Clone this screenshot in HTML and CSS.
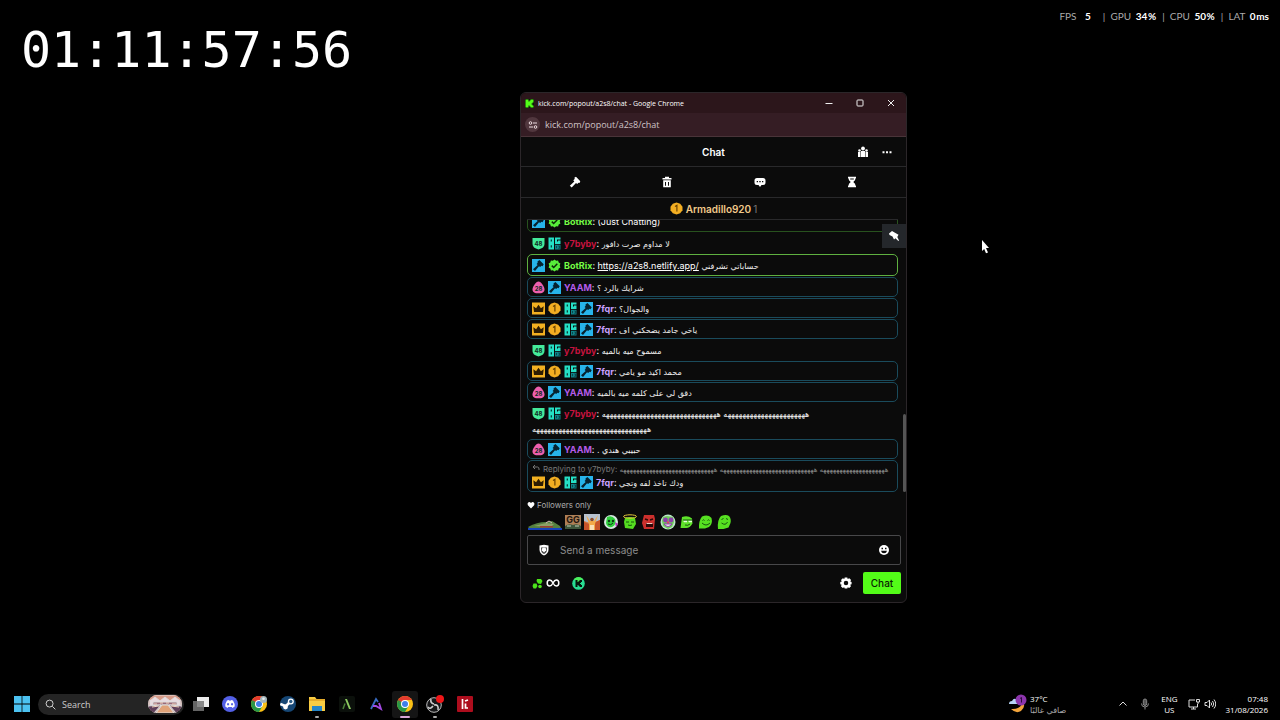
FILE: index.html
```html
<!DOCTYPE html>
<html lang="en">
<head>
  <meta charset="UTF-8">
  <meta name="viewport" content="width=device-width, initial-scale=1.0">
  <title>kick.com/popout/a2s8/chat</title>
  <link rel="stylesheet" href="styles.css">
</head>
<body>
  <!-- shared icons -->
  <svg class="sprite" aria-hidden="true">
    <symbol id="b-mod" viewBox="0 0 13 13">
      <rect width="13" height="13" fill="#27b4ea"/>
      <path d="M5.500 2.500L7.400 1l4.300 4.300-1.200 1.900-1.100-.4-1.200 1.200L7 7.300 3 12 1 10.200l4.700-4.100-1.100-1.200 1.100-1.200z" fill="#06222f"/>
    </symbol>
    <symbol id="b-check" viewBox="0 0 13 13">
      <path d="M6.5.5l1.600 1.200 2-.1.6 1.900 1.700 1.100-.7 1.900.7 1.900-1.700 1.100-.6 1.900-2-.1-1.600 1.200-1.600-1.200-2 .1-.6-1.900L.6 8.400l.7-1.900-.7-1.900 1.700-1.100.6-1.900 2 .1z" fill="#57ed3a"/>
      <path d="M3.800 6.600l1.900 1.900 3.600-3.700" fill="none" stroke="#0b2b06" stroke-width="1.500"/>
    </symbol>
    <symbol id="b-48" viewBox="0 0 13 13">
      <path d="M.5 1h12v6q0 4-6 5.500Q.5 11 .5 7z" fill="#44ea9a"/>
      <text x="6.500" y="8.500" class="badge-num">48</text>
    </symbol>
    <symbol id="b-28" viewBox="0 0 13 13">
      <path d="M6.500.5C9 .5 12.500 5.500 12.500 8.500S10 12.300 6.500 12.300.5 11.500.5 8.500 4 .5 6.500.5z" fill="#ed5fae"/>
      <text x="6.500" y="10" class="badge-num">28</text>
    </symbol>
    <symbol id="b-og" viewBox="0 0 13 13">
      <path d="M.5.5h5.500v12H.5zM7 .5h5.500v2H9v2h1V3.500h2.500v3.500H7z" fill="#25e0c5"/>
      <path d="M2.700 2.500h1.200v2H2.700zM2.700 8.300h1.200v2.200H2.700z" fill="#07322e"/>
      <path d="M7 7.800h5.500v4.700H7z" fill="#0f8389"/>
      <path d="M8.500 9v2.200M10.300 9h1.300v2.300h-1.300" fill="none" stroke="#073a3e" stroke-width=".8"/>
    </symbol>
    <symbol id="b-crown" viewBox="0 0 13 13">
      <rect y=".5" width="13" height="12" fill="#f2b021"/>
      <path d="M2 10L1.300 4.200l2.800 2.100L6.500 2.800l2.400 3.500 2.800-2.100L11 10z" fill="#2d1c02"/>
    </symbol>
    <symbol id="b-one" viewBox="0 0 13 13">
      <path d="M6.500.4l3.700 1.300 2.300 3v3.600l-2.300 3-3.700 1.300-3.700-1.300-2.300-3V4.700l2.300-3z" fill="#f3ae22"/>
      <path d="M5 4.600l1.900-1.200v6" fill="none" stroke="#6b4300" stroke-width="1.200"/>
    </symbol>
    <symbol id="i-chrome" viewBox="0 0 16 16">
      <circle cx="8" cy="8" r="8" fill="#fbc116"/>
      <path d="M8 8L1.100 4A8 8 0 0 1 14.900 4H8z" fill="#e33b2e"/>
      <path d="M1.100 4A8 8 0 0 0 8 16l3.500-6L8 8z" fill="#279847"/>
      <path d="M1.100 4L4.500 10 8 8V4z" fill="#e33b2e"/>
      <path d="M1.100 4l3.400 6 3 2L8 8z" fill="#279847"/>
      <circle cx="8" cy="8" r="4" fill="#fff"/>
      <circle cx="8" cy="8" r="3" fill="#3f7fe8"/>
    </symbol>
  </svg>

  <main class="desktop">
    <header class="hud">
      <div class="timer">01:11:57:56</div>
      <div class="stats">
        <span class="fps">FPS <b>5</b></span>
        <span>|&nbsp; GPU <b>34&#8202;%</b></span>
        <span>|&nbsp; CPU <b>50&#8202;%</b></span>
        <span>|&nbsp; LAT <b>0&#8202;ms</b></span>
      </div>
    </header>

    <section class="window">
      <div class="titlebar">
        <svg class="favicon" viewBox="0 0 9 9"><rect width="9" height="9" fill="#0b1508"/><path d="M.5.5h3v2h1v-1h1v-1h3v3h-1v1h-1v1h1v1h1v2h-3v-1h-1v-1h-1v2h-3z" fill="#53fc18"/></svg>
        <h1>kick.com/popout/a2s8/chat - Google Chrome</h1>
        <button class="win-btn" aria-label="Minimize"><svg viewBox="0 0 8 8"><path d="M.5 4.500h7"/></svg></button>
        <button class="win-btn" aria-label="Maximize"><svg viewBox="0 0 8 8"><rect x="1" y="1" width="6" height="6" rx=".8"/></svg></button>
        <button class="win-btn" aria-label="Close"><svg viewBox="0 0 8 8"><path d="M1 1l6 6M7 1L1 7"/></svg></button>
      </div>
      <div class="urlbar">
        <button class="site-info" aria-label="Site information"><svg viewBox="0 0 10 10"><circle cx="2.500" cy="3" r="1.300"/><path d="M5 3h4M1 7h4"/><circle cx="7.500" cy="7" r="1.300"/></svg></button>
        <input class="url" aria-label="Address" value="kick.com/popout/a2s8/chat" readonly>
      </div>

      <div class="chat-head">
        <h2>Chat</h2>
        <div class="head-tools">
          <button aria-label="Community"><svg class="ico" viewBox="0 0 12 12"><circle cx="6" cy="2.500" r="1.900"/><circle cx="2.500" cy="4.500" r="1.300"/><circle cx="9.500" cy="4.500" r="1.300"/><path d="M4 5h4v6H4zM1 6h2.500v5H1zM8.500 6H11v5H8.500z"/></svg></button>
          <button aria-label="More"><svg class="ico" viewBox="0 0 12 12"><path d="M1.500 5.200h2v2h-2zM5 5.200h2v2H5zM8.500 5.200h2v2h-2z"/></svg></button>
        </div>
      </div>

      <div class="mod-bar">
        <button aria-label="Ban"><svg class="ico" viewBox="0 0 12 12"><path d="M5.500 1.500L7 .8l4.300 4.500L10.500 7l-1-.2-1.300 1.300L7 7l-4.300 4.500L.8 9.800 5.300 5.500l-1-1.200 1.400-1.400z"/></svg></button>
        <button aria-label="Delete"><svg class="ico" viewBox="0 0 12 12"><path fill-rule="evenodd" d="M4 .8h4V2h2.500v1.500h-9V2H4zM2.200 4.300h7.600v7H2.200zM4 6v3.700h1V6zm3 0v3.700h1V6z"/></svg></button>
        <button aria-label="Replies"><svg class="ico" viewBox="0 0 12 12"><path fill-rule="evenodd" d="M3 2h6q2.500 0 2.500 2.500v2Q11.500 9 9 9H7.500L6 11 4.500 9H3Q.5 9 .5 6.500v-2Q.5 2 3 2zm-.3 3v1.300H4V5zm2.600 0v1.300h1.400V5zM8 5v1.300h1.300V5z"/></svg></button>
        <button aria-label="Slow mode"><svg class="ico" viewBox="0 0 12 12"><path fill-rule="evenodd" d="M2 .8h8v1.700H9.200v1.500L7.300 6l1.900 2v1.500h.8v1.700H2V9.500h.8V8l1.900-2-1.900-2V2.500H2zM4.200 2.500v1h3.600v-1z"/></svg></button>
      </div>

      <div class="leader">
        <svg class="badge"><use href="#b-one"/></svg>
        <strong>Armadillo920</strong> <span>1</span>
      </div>

      <div class="feed">
        <ul class="messages">
          <li class="boxed bot dim"><svg class="badge"><use href="#b-mod"/></svg><svg class="badge"><use href="#b-check"/></svg><b class="green">BotRix</b>: (Just Chatting)</li>
          <li><svg class="badge"><use href="#b-48"/></svg><svg class="badge"><use href="#b-og"/></svg><b class="red">y7byby</b>: <span class="ar" dir="rtl" lang="ar">لا مداوم صرت دافور</span></li>
          <li class="boxed bot"><svg class="badge"><use href="#b-mod"/></svg><svg class="badge"><use href="#b-check"/></svg><b class="green">BotRix</b>: <a href="https://a2s8.netlify.app/">https://a2s8.netlify.app/</a> <span class="ar" dir="rtl" lang="ar">حساباتي تشرفني</span></li>
          <li class="boxed"><svg class="badge"><use href="#b-28"/></svg><svg class="badge"><use href="#b-mod"/></svg><b class="purple">YAAM</b>: <span class="ar" dir="rtl" lang="ar">شرايك بالرد ؟</span></li>
          <li class="boxed"><svg class="badge"><use href="#b-crown"/></svg><svg class="badge"><use href="#b-one"/></svg><svg class="badge"><use href="#b-og"/></svg><svg class="badge"><use href="#b-mod"/></svg><b class="lilac">7fqr</b>: <span class="ar" dir="rtl" lang="ar">والجوال؟</span></li>
          <li class="boxed"><svg class="badge"><use href="#b-crown"/></svg><svg class="badge"><use href="#b-one"/></svg><svg class="badge"><use href="#b-og"/></svg><svg class="badge"><use href="#b-mod"/></svg><b class="lilac">7fqr</b>: <span class="ar" dir="rtl" lang="ar">ياخي جامد يضحكني اف</span></li>
          <li><svg class="badge"><use href="#b-48"/></svg><svg class="badge"><use href="#b-og"/></svg><b class="red">y7byby</b>: <span class="ar" dir="rtl" lang="ar">مسموح ميه بالميه</span></li>
          <li class="boxed"><svg class="badge"><use href="#b-crown"/></svg><svg class="badge"><use href="#b-one"/></svg><svg class="badge"><use href="#b-og"/></svg><svg class="badge"><use href="#b-mod"/></svg><b class="lilac">7fqr</b>: <span class="ar" dir="rtl" lang="ar">محمد اكيد مو يامي</span></li>
          <li class="boxed"><svg class="badge"><use href="#b-28"/></svg><svg class="badge"><use href="#b-mod"/></svg><b class="purple">YAAM</b>: <span class="ar" dir="rtl" lang="ar">دقق لي على كلمه ميه بالميه</span></li>
          <li><svg class="badge"><use href="#b-48"/></svg><svg class="badge"><use href="#b-og"/></svg><b class="red">y7byby</b>: <span class="ar" dir="rtl" lang="ar">ههههههههههههههههههههههه هههههههههههههههههههههههههههههههه هههههههههههههههههههههههههههههههه</span></li>
          <li class="boxed"><svg class="badge"><use href="#b-28"/></svg><svg class="badge"><use href="#b-mod"/></svg><b class="purple">YAAM</b>: <span class="ar" dir="rtl" lang="ar">حبيبي هندي .</span></li>
          <li class="boxed">
            <div class="reply"><svg viewBox="0 0 8 8"><path d="M3 1L1 3l2 2M1 3h4.500q1.500 0 1.500 2v1"/></svg>Replying to y7byby: <span class="ar" dir="rtl" lang="ar">ههههههههههههههههههههه هههههههههههههههههههههههههههههه هههههههههههههههههههههههههههههه</span></div>
            <svg class="badge"><use href="#b-crown"/></svg><svg class="badge"><use href="#b-one"/></svg><svg class="badge"><use href="#b-og"/></svg><svg class="badge"><use href="#b-mod"/></svg><b class="lilac">7fqr</b>: <span class="ar" dir="rtl" lang="ar">ودك تاخذ لفه وتجي</span>
          </li>
        </ul>
        <button class="pin" aria-label="Pinned message"><svg class="ico" viewBox="0 0 12 12"><path d="M1 3.500L4 1l3 1.800 3.500 2L9.300 7l1.700 3.500-.7.500L7.500 8.300 6 9.500 4.500 6.500 1.500 5z"/></svg></button>
        <div class="scroll-thumb"></div>
      </div>

      <div class="composer">
        <p class="followers"><svg viewBox="0 0 9 9"><path d="M4.500 8.300L1 4.800Q0 3 1.300 1.600 3 .5 4.500 2.300 6 .5 7.700 1.600 9 3 8 4.800z" fill="#fff"/></svg>Followers only</p>
        <div class="emotes">
          <button class="wide" aria-label="Emote frog car"><svg viewBox="0 0 34 16"><path d="M0 13q9-5 18-5l6-1 8 5 1 2H1z" fill="#55803f"/><path d="M6 12l12-3 8 1-3 3z" fill="#8ca066"/><path d="M18 9l3-2 3 2" stroke="#d3b7b5" fill="none"/><path d="M12 12h13v1.500H12z" fill="#9d3e31"/><path d="M0 14h34v2H0z" fill="#1643bd"/></svg></button>
          <button aria-label="Emote GG"><svg viewBox="0 0 16 16"><rect y="1" width="16" height="14" fill="#ae8058"/><text x="8" y="9" class="gg">GG</text><path d="M0 12q4-3 8-1 4-2 8 1v3H0z" fill="#3f573c"/><path d="M2 12h4M10 12h4" stroke="#c7d2ba"/></svg></button>
          <button aria-label="Emote cheer"><svg viewBox="0 0 16 16"><rect width="16" height="16" fill="#d77b42"/><path d="M0 0h16v6L9 10 0 7z" fill="#b6c1cf"/><path d="M0 8l5 2v6H0zM11 8l5-2v10h-5z" fill="#c8542a"/><path d="M2 1l4 6h4l4-6-3 9v6H5v-6z" fill="#f3a948"/><path d="M6 11h4v5H6z" fill="#f9dfb8"/><circle cx="8" cy="5.500" r="1.800" fill="#8a4a29"/></svg></button>
          <button aria-label="Emote headphones"><svg viewBox="0 0 16 16"><circle cx="8" cy="8" r="7" fill="#d7e9e1"/><path d="M4 3q5-2 8 2 2 5-3 8-5 1-6-4z" fill="#2fcf3c"/><circle cx="6" cy="7" r="1.200" fill="#103815"/><circle cx="10" cy="7" r="1.200" fill="#103815"/><path d="M5 10q3 2 5-1" stroke="#103815" fill="none"/><path d="M12 8l3 2-2 3z" fill="#b02bb7"/></svg></button>
          <button aria-label="Emote angel"><svg viewBox="0 0 16 16"><path d="M3 4q5-2 10 0l1 6-3 5-8-1-1-6z" fill="#54dc20"/><ellipse cx="8" cy="2.500" rx="6.500" ry="1.700" fill="none" stroke="#e6c83b"/><path d="M4 8h3M9 8h3M6 11q2 1 4 0" stroke="#15570b" fill="none"/></svg></button>
          <button aria-label="Emote rage"><svg viewBox="0 0 16 16"><path d="M3 1h10l1 4-1 10H3L1 9z" fill="#cc302d"/><path d="M4 5l3 1M12 5L9 6" stroke="#310806" stroke-width="1.500"/><path d="M5 9h7v4H5z" fill="#2d0909"/><path d="M5.500 9.500h6" stroke="#f4c8bf"/></svg></button>
          <button aria-label="Emote clown"><svg viewBox="0 0 16 16"><circle cx="8" cy="8" r="7.500" fill="#bce5c8"/><path d="M3 3l4-1 6 1 1 5-2 5-4 2-5-3-1-5z" fill="#6fca5c"/><circle cx="5.500" cy="6" r="2.400" fill="#8d3fae"/><circle cx="11" cy="6" r="2.400" fill="#8d3fae"/><circle cx="8" cy="8.500" r="1.300" fill="#e33a6b"/><path d="M4 10q4 5 8 0z" fill="#f4f4f4" stroke="#8d3fae"/></svg></button>
          <button aria-label="Emote smirk"><svg viewBox="0 0 16 16"><path d="M3 3q6-2 10 1.500l.5 5q-3 5-7 4.500H1.500z" fill="#5fe32a"/><path d="M4 6.500h4v1.800H5zM9 6.500h4v1.800h-3z" fill="#e5ffd9"/><path d="M4 6h9M6 11q3 1 5-1" stroke="#17560e" fill="none"/></svg></button>
          <button aria-label="Emote happy"><svg viewBox="0 0 16 16"><path d="M4 2.500q6-2.500 9.500 1.500 1.500 6-2.500 9l-4 1.500H1Q.5 7 4 2.500z" fill="#56e021"/><path d="M4.500 6.500q1-1.500 2 0M9.500 6.500q1-1.500 2 0M4 9q4 4 8 0" stroke="#17560e" fill="none"/></svg></button>
          <button aria-label="Emote smile"><svg viewBox="0 0 16 16"><path d="M4 2q5-2 8 0 2.500 3 1.500 7l-2 4.500-5 1.500H1Q0 6 4 2z" fill="#56e021"/><path d="M4.500 5.500l2-1M9 4.500l2 1M4.500 9q4 3 6-1" stroke="#17560e" fill="none"/></svg></button>
        </div>
        <div class="message-box">
          <svg class="ico" viewBox="0 0 12 12"><path d="M1.500 1.500L6 .8l4.500.7v4Q10.500 9.500 6 11.500 1.500 9.500 1.500 5.500z"/><path d="M3 3.500h6v2Q9 8.500 6 10 3 8.500 3 5.500z" fill="#444"/><path d="M3.800 4.500L6 3.500l2.200 1v1.700L6 8.500 3.800 6.200z"/></svg>
          <input type="text" aria-label="Send a message" placeholder="Send a message">
          <button aria-label="Emotes"><svg class="ico" viewBox="0 0 12 12"><circle cx="6" cy="6" r="5"/><path d="M3.500 4.500h1.500M7 4.500h1.500" stroke="#0b0b0b" stroke-width="1.300"/><path d="M3 6.800h6Q8.500 9.300 6 9.300T3 6.800z" fill="#0b0b0b"/></svg></button>
        </div>
        <div class="actions">
          <button class="points" aria-label="Channel points">
            <svg viewBox="0 0 11 11"><path d="M5 1h4l1.500 2L9 6 6 5.500 4.500 3zM1.500 5.500h3L5.500 8 4 10.500H1.500L.5 8z" fill="#4be41b"/><circle cx="8" cy="8.500" r="1.800" fill="#4be41b"/></svg>
            <svg class="infinity" viewBox="0 0 14 10"><path d="M7 5Q5.500 2 3.700 2a2.500 3 0 0 0 0 6Q5.500 8 7 5t3.300-3a2.500 3 0 0 1 0 6Q8.500 8 7 5z"/></svg>
          </button>
          <button class="kicks" aria-label="Kicks"><svg viewBox="0 0 13 13"><circle cx="6.500" cy="6.500" r="6.300" fill="#27dd93"/><path d="M2 2A6.300 6.300 0 0 1 11 2L6 6z" fill="#4cf05a"/><path d="M3.500 3h2v2h1V4h1V3h2.500v2H9v1H8v1h1v1h1v2H7.500V9h-1V8h-1v2h-2z" fill="#06160e"/></svg></button>
          <button class="gear" aria-label="Chat settings"><svg class="ico" viewBox="0 0 12 12"><path fill-rule="evenodd" d="M4.700.5h2.600l.4 1.500 1.600-.8 1.800 1.900L10.300 4.500l1.300.4v2.400l-1.400.4.800 1.500-1.800 1.800-1.500-.7-.4 1.300H4.700l-.5-1.400-1.500.8-1.800-1.800.8-1.500L.3 7.300V4.900l1.500-.5L1 3l1.800-1.800 1.500.7zM6 3.800A2.200 2.200 0 1 0 6 8.300 2.200 2.200 0 1 0 6 3.800z"/></svg></button>
          <button class="send">Chat</button>
        </div>
      </div>
    </section>

    <svg class="cursor" viewBox="0 0 9 14"><path d="M1 0l7 8H5l2 4.500-2 .8L3.200 9 1 11z" fill="#fff"/></svg>
  </main>

  <footer class="taskbar">
    <nav class="apps">
      <button aria-label="Start"><svg viewBox="0 0 16 16"><path d="M0 0h7.600v7.600H0zM8.400 0H16v7.600H8.400zM0 8.400h7.600V16H0zM8.400 8.400H16V16H8.400z" fill="#4cc2f1"/></svg></button>
      <label class="search">
        <svg viewBox="0 0 12 12"><circle cx="5" cy="5" r="3.800"/><path d="M8 8l3.300 3.300"/></svg>
        <input type="text" placeholder="Search" aria-label="Search">
        <svg class="scene" viewBox="0 0 34 18"><clipPath id="oval"><rect width="34" height="18" rx="9"/></clipPath><g clip-path="url(#oval)"><rect width="34" height="18" fill="#cfa9a5"/><path d="M0 0h34v5L17 7 0 5z" fill="#d79b89"/><path d="M2 6l5-4 5 4 5-4 5 4 5-4 5 4v5H2z" fill="#eadbe0"/><path d="M5 7h24v3H5z" fill="#9a6a78"/><path d="M0 11l13-1-7 8H0zM34 11l-13-1 7 8h6z" fill="#60405a"/><path d="M14 10h6l6 8H8z" fill="#dfa278"/><path d="M4 12l7-1M23 11l8 1M6 9h3M12 8h3M18 8h3M24 9h4" stroke="#f4d8c2"/></g></svg>
      </label>
      <button aria-label="Task view"><svg viewBox="0 0 16 16"><rect x="4" y="1" width="12" height="10" fill="#ececec"/><rect y="5" width="11" height="10" fill="#777" opacity=".85"/></svg></button>
      <button aria-label="Discord"><svg viewBox="0 0 16 16"><circle cx="8" cy="8" r="8" fill="#5360e6"/><path fill-rule="evenodd" d="M5 4.500l2-.5.5.8h1L9 4l2 .5q2 3 1.700 6L10.500 12l-.8-1H6.300l-.8 1-2.200-1.500Q3 7.500 5 4.500zM6 7a1.100 1.200 0 1 0 .1 0zM10 7a1.100 1.200 0 1 0 .1 0z" fill="#fff"/></svg></button>
      <button aria-label="Chrome profile"><svg viewBox="0 0 16 16"><use href="#i-chrome"/><circle cx="12.500" cy="3.500" r="3.500" fill="#a4b7bc"/><circle cx="12.500" cy="2.800" r="1.300" fill="#e9edf0"/></svg></button>
      <button aria-label="Steam"><svg viewBox="0 0 16 16"><circle cx="8" cy="8" r="8" fill="#164775"/><path d="M.3 8l5 2M5 11l5-5" stroke="#fff" stroke-width="2.600"/><circle cx="5.500" cy="11" r="2.400" fill="#fff"/><circle cx="10.800" cy="5.500" r="3" fill="#fff"/><circle cx="10.800" cy="5.500" r="1.700" fill="#2b5d88"/></svg></button>
      <button class="running" aria-label="File Explorer"><svg viewBox="0 0 16 16"><path d="M0 1h6l1.500 2H16v12H0z" fill="#f8cc43"/><path d="M0 3h16v2H0z" fill="#e6ad2b"/><path d="M3 10h10v5H3z" fill="#2586c9"/></svg></button>
      <button aria-label="App A green"><svg viewBox="0 0 16 16"><rect width="16" height="16" rx="2" fill="#0b100b"/><path d="M6 3h2l4 10h-2z" fill="#8cc860"/><path d="M6 7.500L4 13" fill="none" stroke="#4c8238" stroke-width="1.500"/></svg></button>
      <button aria-label="App A purple"><svg viewBox="0 0 16 16"><path d="M3 13L8 3l2 3" fill="none" stroke="#376bc2" stroke-width="1.800"/><path d="M5 10h3l5 3-2-6" fill="none" stroke="#a249e2" stroke-width="1.800"/></svg></button>
      <button class="running active" aria-label="Chrome"><svg><use href="#i-chrome"/></svg></button>
      <button class="running" aria-label="OBS Studio"><svg class="obs" viewBox="0 0 18 18"><circle cx="8" cy="10" r="7.300" fill="#171719" stroke="#bbb"/><path d="M8 9q-4-1-3-5M8 10q5-1 4 5M7 11q-3 4-5 1" fill="none" stroke="#ccc" stroke-width="1.600"/><circle cx="14" cy="4" r="4" fill="#f01618"/></svg></button>
      <button aria-label="App red"><svg viewBox="0 0 16 16"><rect width="16" height="16" rx="1" fill="#ad0d1d"/><path d="M5.500 3v10M8.500 7.500v4.500H11M8 5l3-1" fill="none" stroke="#fff" stroke-width="1.700"/></svg></button>
    </nav>

    <div class="tray">
      <button class="weather">
        <svg viewBox="0 0 20 20"><path d="M15 8q3 5-2 9-5 3-10-2 9 1 12-7z" fill="#f3a43b"/><path d="M1 10q0-3 3-3 2-4 5-1 2 1 1 4z" fill="#b5d4f5"/><circle cx="13" cy="6" r="5.500" fill="#8c35ac"/><path d="M12 4.500l1.500-1V8.500" fill="none" stroke="#2c0b3b"/></svg>
        <span>37°C<br><span class="forecast" dir="rtl" lang="ar">صافي غالبًا</span></span>
      </button>
      <button aria-label="Show hidden icons"><svg viewBox="0 0 12 12"><path d="M2.500 7.500L6 4l3.500 3.500"/></svg></button>
      <button aria-label="Microphone"><svg class="gray" viewBox="0 0 12 12"><rect x="4.300" y="1" width="3.400" height="6.500" rx="1.700" fill="#555"/><path d="M2.500 5.500Q2.500 9 6 9t3.500-3.500M6 9v2.500"/></svg></button>
      <button class="lang">ENG<br>US</button>
      <button class="status" aria-label="Network and volume">
        <svg viewBox="0 0 12 12"><path d="M7 2H1v7h8.500V6M3 11h5M5.500 9v2M8.500 1.500h3v2.500h-3zM10 4v2"/></svg>
        <svg viewBox="0 0 12 12"><path d="M1 4.500h2L5.500 2v8L3 7.500H1zM7 4.500q1.300 1.500 0 3M8.500 3q2.500 3 0 6M10 1.500q3.500 4.500 0 9"/></svg>
      </button>
      <button class="clock">07:48<br>31/08/2026</button>
    </div>
  </footer>
</body>
</html>
```

FILE: styles.css
```css
* {
  box-sizing: border-box;
}
body {
  margin: 0;
  min-height: 100vh;
  display: flex;
  flex-direction: column;
  background: #000;
  color: #fff;
  font-family: Inter, "DejaVu Sans", sans-serif;
  font-size: 10px;
}
button, input {
  font: inherit;
  color: inherit;
  background: none;
  border: 0;
  padding: 0;
  outline: 0;
}
button {
  display: flex;
  align-items: center;
  justify-content: center;
}
h1, h2, p, ul {
  margin: 0;
  padding: 0;
}
.sprite {
  display: none;
}
.desktop {
  flex: 1;
  position: relative;
}

/* overlay */
.hud {
  display: flex;
  justify-content: space-between;
  align-items: flex-start;
  padding: 10px 11px 0 21px;
}
.timer {
  font-family: "DejaVu Sans Mono", monospace;
  font-size: 50px;
  line-height: 80px;
}
.stats {
  display: flex;
  gap: 6px;
  font-family: Lato, sans-serif;
  line-height: 12px;
  color: #aaa;
}
.stats b {
  color: #fff;
  margin-left: 2px;
}
.fps b {
  margin: 0 6px;
}

/* popout window */
.window {
  position: absolute;
  left: 520px;
  top: 92px;
  width: 387px;
  background: #0b0b0b;
  border: 1px solid #2b2629;
  border-radius: 6px;
  overflow: hidden;
}
.titlebar {
  display: flex;
  align-items: center;
  height: 20px;
  padding-left: 4px;
  background: #2c161b;
  font-family: "Open Sans", sans-serif;
}
.titlebar h1 {
  flex: 1;
  margin-left: 4px;
  font-size: 7px;
  font-weight: 400;
}
.favicon {
  width: 9px;
  height: 9px;
}
.win-btn {
  width: 31px;
  height: 19px;
}
.win-btn svg {
  width: 8px;
  height: 8px;
  fill: none;
  stroke: #eee;
}
.urlbar {
  display: flex;
  align-items: center;
  gap: 5px;
  height: 24px;
  padding: 0 4px;
  background: #351d24;
  border-bottom: 1px solid #4a3439;
}
.site-info {
  width: 15px;
  height: 15px;
  border-radius: 50%;
  background: #51373e;
}
.site-info svg {
  width: 10px;
  height: 10px;
  fill: none;
  stroke: #eedde1;
}
.url {
  flex: 1;
  font-family: "Open Sans", sans-serif;
  font-size: 9px;
  color: #cfc3c6;
}
.ico {
  width: 12px;
  height: 12px;
  fill: #fff;
}
.chat-head {
  display: grid;
  grid-template-columns: 1fr auto 1fr;
  align-items: center;
  height: 30px;
  padding: 0 13px;
  border-bottom: 1px solid #29292b;
}
.chat-head h2 {
  grid-column: 2;
  font-size: 10px;
  font-weight: 600;
}
.head-tools {
  display: flex;
  justify-content: flex-end;
  gap: 12px;
}
.mod-bar {
  display: grid;
  grid-template-columns: repeat(4, 1fr);
  height: 31px;
  padding: 0 8px;
  border-bottom: 1px solid #29292b;
}
.leader {
  display: flex;
  align-items: center;
  justify-content: center;
  height: 21px;
  color: #777;
}
.leader strong {
  color: #f1c98a;
  font-weight: 600;
  margin-right: 2px;
}

/* messages */
.feed {
  position: relative;
  height: 273px;
  padding: 0 8px 0 6px;
}
.messages {
  display: flex;
  flex-direction: column;
  justify-content: flex-end;
  gap: 1px;
  height: 100%;
  overflow: hidden;
  border-top: 1px solid #29292b;
  list-style: none;
  font-size: 9px;
}
.messages li {
  flex: none;
  padding: 2px 4px 1px;
  border: 1px solid transparent;
  border-radius: 5px;
  line-height: 15px;
}
.messages .boxed {
  border-color: #1a4b5c;
}
.messages .bot {
  padding: 3px 4px 2px;
  border-color: #5fb040;
}
.messages .dim {
  border-color: #28521e;
}
.messages a {
  color: #fff;
}
.badge {
  width: 13px;
  height: 13px;
  margin-right: 3px;
  vertical-align: -3px;
}
.badge-num {
  font: bold 6px Inter, sans-serif;
  text-anchor: middle;
  fill: #102b1f;
}
.ar {
  font-family: "DejaVu Sans", sans-serif;
  font-size: 8px;
  line-height: 1;
  color: #f2f2f2;
}
.green { color: #75fd45; }
.red { color: #c5133f; }
.purple { color: #b45be8; }
.lilac { color: #c9a0ff; }
.reply {
  height: 12px;
  line-height: 12px;
  font-size: 8px;
  color: #777;
  white-space: nowrap;
  overflow: hidden;
}
.reply .ar {
  font-size: 7px;
  color: #888;
}
.reply svg {
  width: 8px;
  height: 8px;
  margin-right: 3px;
  fill: none;
  stroke: #777;
}
.pin {
  position: absolute;
  right: 0;
  top: 5px;
  width: 24px;
  height: 24px;
  background: #24272b;
}
.scroll-thumb {
  position: absolute;
  right: 0;
  bottom: 0;
  width: 3px;
  height: 78px;
  border-radius: 2px;
  background: #555;
}

/* composer */
.composer {
  padding: 7px 5px 8px 6px;
}
.followers {
  display: flex;
  align-items: center;
  gap: 2px;
  height: 12px;
  font-size: 8px;
  color: #aaa;
}
.followers svg {
  width: 8px;
  height: 8px;
}
.emotes {
  display: flex;
  gap: 3px;
  padding: 3px 0 5px 1px;
}
.emotes svg {
  width: 16px;
  height: 16px;
}
.emotes .wide svg {
  width: 34px;
}
.gg {
  font: bold 9px Inter, sans-serif;
  text-anchor: middle;
  fill: #21150d;
}
.message-box {
  display: flex;
  align-items: center;
  height: 30px;
  padding: 0 10px;
  border: 1px solid #48484a;
  border-radius: 2px;
}
.message-box input {
  flex: 1;
  margin-left: 10px;
}
.message-box input::placeholder {
  color: #8b8b8b;
  opacity: 1;
}
.actions {
  display: flex;
  align-items: center;
  padding-top: 7px;
}
.points {
  gap: 3px;
  margin-left: 5px;
}
.points svg {
  width: 11px;
  height: 11px;
}
.points .infinity {
  width: 14px;
  height: 10px;
  fill: none;
  stroke: #fff;
  stroke-width: 1.5;
}
.kicks {
  margin-left: 12px;
}
.kicks svg {
  width: 13px;
  height: 13px;
}
.gear {
  margin-left: auto;
  margin-right: 11px;
}
.send {
  width: 38px;
  height: 22px;
  border-radius: 2px;
  background: #53fc18;
  color: #0a2004;
  font-weight: 500;
}
.cursor {
  position: absolute;
  left: 981px;
  top: 240px;
  width: 9px;
  height: 14px;
}

/* taskbar */
.taskbar {
  display: flex;
  justify-content: space-between;
  align-items: center;
  height: 32px;
  padding: 0 12px 0 9px;
  font-family: "Open Sans", sans-serif;
  font-size: 8px;
}
.apps {
  display: flex;
  align-items: center;
  gap: 4px;
}
.apps button {
  position: relative;
  width: 25px;
  height: 27px;
}
.apps .running {
  width: 26px;
}
.apps button svg {
  width: 16px;
  height: 16px;
}
.apps .active {
  background: #151515;
  border-radius: 3px;
}
.running::after {
  content: "";
  position: absolute;
  bottom: 0;
  width: 4px;
  height: 2px;
  border-radius: 1px;
  background: #aaa;
}
.active::after {
  width: 10px;
  background: #dba5d7;
}
.apps button .obs {
  width: 18px;
  height: 18px;
}
.search {
  display: flex;
  align-items: center;
  width: 146px;
  height: 21px;
  padding: 0 2px 0 7px;
  border-radius: 11px;
  background: #242424;
  font-size: 9px;
}
.search svg {
  width: 11px;
  height: 11px;
  fill: none;
  stroke: #ddd;
}
.search .scene {
  width: 34px;
  height: 18px;
}
.search input {
  flex: 1;
  min-width: 0;
  margin-left: 6px;
}
.search input::placeholder {
  color: #ccc;
  opacity: 1;
}
.tray {
  display: flex;
  align-items: center;
  gap: 10px;
}
.tray button {
  line-height: 11px;
}
.tray svg {
  width: 12px;
  height: 12px;
  fill: none;
  stroke: #ddd;
}
.tray .gray {
  stroke: #888;
}
.tray .weather {
  gap: 2px;
  margin-right: 41px;
  text-align: left;
}
.weather svg {
  width: 20px;
  height: 20px;
  stroke: none;
}
.forecast {
  font-family: "DejaVu Sans", sans-serif;
  color: #aaa;
}
.status {
  gap: 4px;
}
.clock {
  text-align: right;
}
```
